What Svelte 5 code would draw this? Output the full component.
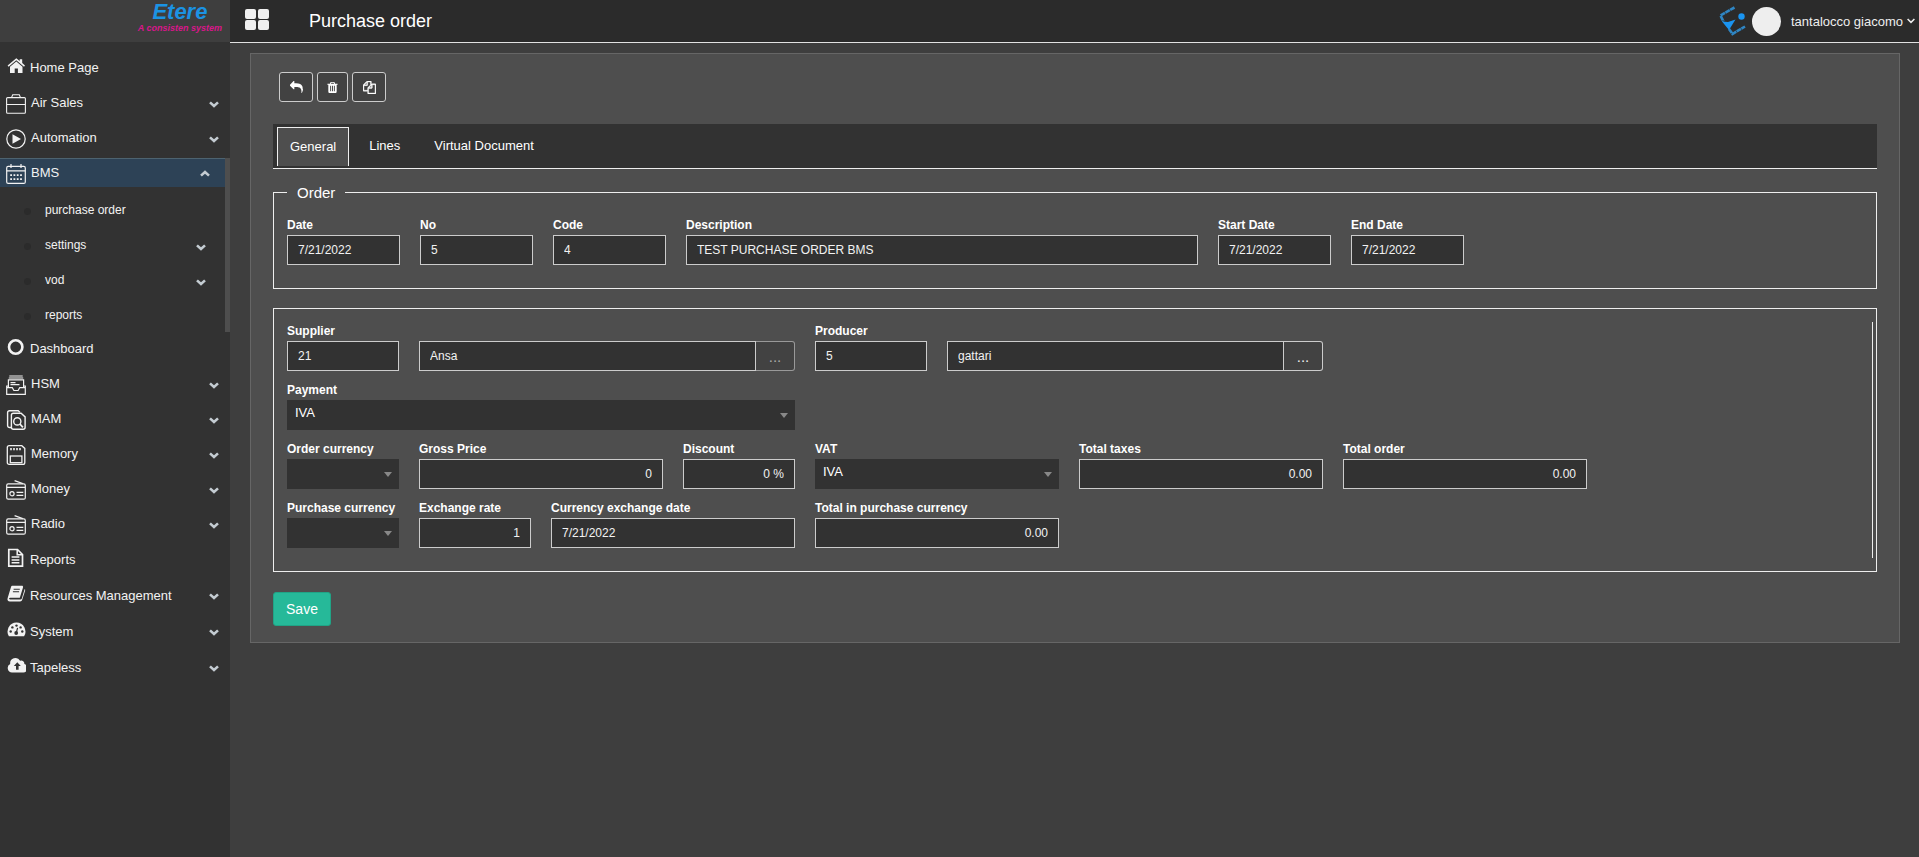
<script lang="ts">
  interface MenuEntry {
    label: string;
    icon: string;
    glyph?: boolean;
    leaf?: boolean;
    children?: { label: string; leaf?: boolean }[];
  }

  interface Field {
    id: string;
    label?: string;
    name?: string;
    value: string;
    kind?: "select" | "lookup";
    span?: number;
    first?: boolean;
    numeric?: boolean;
    muted?: boolean;
  }

  const menu: MenuEntry[] = [
    { label: "Home Page", icon: "home", glyph: true, leaf: true },
    { label: "Air Sales", icon: "briefcase" },
    { label: "Automation", icon: "play" },
    {
      label: "BMS",
      icon: "calendar",
      children: [
        { label: "purchase order", leaf: true },
        { label: "settings" },
        { label: "vod" },
        { label: "reports", leaf: true },
      ],
    },
    { label: "Dashboard", icon: "circle", glyph: true, leaf: true },
    { label: "HSM", icon: "archive" },
    { label: "MAM", icon: "search-doc" },
    { label: "Memory", icon: "card" },
    { label: "Money", icon: "radio" },
    { label: "Radio", icon: "radio" },
    { label: "Reports", icon: "file", glyph: true, leaf: true },
    { label: "Resources Management", icon: "book", glyph: true },
    { label: "System", icon: "gauge", glyph: true },
    { label: "Tapeless", icon: "cloud", glyph: true },
  ];

  const tabs = ["General", "Lines", "Virtual Document"];
  let activeTab = $state("General");

  const orderFields: Field[] = [
    { id: "date", label: "Date", value: "7/21/2022" },
    { id: "no", label: "No", value: "5" },
    { id: "code", label: "Code", value: "4" },
    { id: "description", label: "Description", value: "TEST PURCHASE ORDER BMS", span: 4 },
    { id: "start-date", label: "Start Date", value: "7/21/2022" },
    { id: "end-date", label: "End Date", value: "7/21/2022" },
  ];

  const detailFields: Field[] = [
    { id: "supplier", label: "Supplier", value: "21" },
    { id: "supplier-name", name: "Supplier name", value: "Ansa", kind: "lookup", span: 3, muted: true },
    { id: "producer", label: "Producer", value: "5" },
    { id: "producer-name", name: "Producer name", value: "gattari", kind: "lookup", span: 3 },
    { id: "payment", label: "Payment", value: "IVA", kind: "select", span: 4, first: true },
    { id: "order-currency", label: "Order currency", value: "", kind: "select", first: true },
    { id: "gross-price", label: "Gross Price", value: "0", span: 2, numeric: true },
    { id: "discount", label: "Discount", value: "0 %", numeric: true },
    { id: "vat", label: "VAT", value: "IVA", kind: "select", span: 2 },
    { id: "total-taxes", label: "Total taxes", value: "0.00", span: 2, numeric: true },
    { id: "total-order", label: "Total order", value: "0.00", span: 2, numeric: true },
    { id: "purchase-currency", label: "Purchase currency", value: "", kind: "select", first: true },
    { id: "exchange-rate", label: "Exchange rate", value: "1", numeric: true },
    { id: "exchange-date", label: "Currency exchange date", value: "7/21/2022", span: 2 },
    { id: "total-purchase", label: "Total in purchase currency", value: "0.00", span: 2, numeric: true },
  ];
</script>

{#snippet chevron(up = false)}
  <svg class="chevron" class:up viewBox="0 0 10 7" aria-hidden="true">
    <path d="M1 1.4l4 3.6 4-3.6" fill="none" stroke="currentColor" stroke-width="2.6" />
  </svg>
{/snippet}

{#snippet icon(name: string)}
  {#if name === "home"}
    <svg class="icon" viewBox="0 0 20 20" fill="currentColor" aria-hidden="true">
      <path d="M4 10.8L10.300 5.600l6.200 5.200V17H11.900V12.500H8.700V17H4zM10.300 2.200L13.700 5V3.200H16.200V7.100L19 9.500 18 10.700 10.300 4.300 2.600 10.700 1.600 9.500z" />
    </svg>
  {:else if name === "circle"}
    <svg class="icon" viewBox="0 0 20 20" fill="none" stroke="currentColor" aria-hidden="true">
      <circle cx="9.700" cy="10" r="6.700" stroke-width="2.600" />
    </svg>
  {:else if name === "file"}
    <svg class="icon" viewBox="0 0 20 20" fill="none" stroke="currentColor" aria-hidden="true">
      <path d="M2.800 1.500h8.700l5 5V18.100H2.800z" stroke-width="1.700" />
      <path d="M11.200 1.500v5.200h5M5.600 9.100h7.800M5.600 11.900h7.800M5.600 14.700h7.800" stroke-width="1.500" />
    </svg>
  {:else if name === "book"}
    <svg class="icon" viewBox="0 0 20 20" aria-hidden="true">
      <path d="M6.200 1.800h9.600c1 0 1.500.7 1.200 1.600l-3.200 10.400H4.200c-1.300 0-1.600 1.400-.2 1.700h10.600c.5 0 .9-.3 1.100-.8l3-9.600c.7.500.5 1.200.3 1.900l-2.800 8.800c-.3 1-1.100 1.600-2.100 1.600H3.900c-1.900 0-2.900-1.600-2.300-3.200L5 3c.2-.7.600-1.200 1.200-1.200z" fill="currentColor" />
      <path d="M7.600 5.200h6.200M6.900 7.700h6.200" stroke="#323232" stroke-width="1.100" />
    </svg>
  {:else if name === "gauge"}
    <svg class="icon" viewBox="0 0 20 20" aria-hidden="true">
      <path d="M10.500 2.600a9 9 0 0 0-7.600 13.700h15.200A9 9 0 0 0 10.500 2.600z" fill="currentColor" />
      <g fill="#323232">
        <circle cx="4.700" cy="11.500" r="1.200" />
        <circle cx="6.400" cy="7.400" r="1.200" />
        <circle cx="10.500" cy="5.600" r="1.200" />
        <circle cx="14.600" cy="7.400" r="1.200" />
        <circle cx="16.300" cy="11.500" r="1.200" />
        <circle cx="10.200" cy="13" r="1.900" />
      </g>
      <path d="M10.200 13l1.400-5.200" stroke="#323232" stroke-width="1.200" />
    </svg>
  {:else if name === "cloud"}
    <svg class="icon" viewBox="0 0 20 20" aria-hidden="true">
      <path d="M6 16.500A4.500 4.500 0 0 1 4.200 8a5.300 5.300 0 0 1 9.900-3.200 3 3 0 0 1 4.200 3.300 4.300 4.300 0 0 1-.9 8.400z" fill="currentColor" />
      <path d="M11.300 6.300l3.500 3.700h-2.200v3.800H10V10H7.800z" fill="#323232" />
    </svg>
  {:else if name === "briefcase"}
    <svg class="icon" viewBox="0 0 20 20" fill="none" stroke="currentColor" stroke-width="1.100" aria-hidden="true">
      <rect x=".6" y="3.600" width="18.800" height="15.600" rx="1" />
      <path d="M5.500 3.600l1.200-2.800h6.600l1.200 2.800M.6 10.500h18.800" />
    </svg>
  {:else if name === "play"}
    <svg class="icon" viewBox="0 0 20 20" aria-hidden="true">
      <circle cx="10" cy="10" r="9.200" fill="none" stroke="currentColor" stroke-width="1.200" />
      <path d="M6.500 5.200L15 10l-8.500 4.800z" fill="currentColor" />
    </svg>
  {:else if name === "calendar"}
    <svg class="icon" viewBox="0 0 20 20" fill="none" stroke="currentColor" stroke-width="1.200" aria-hidden="true">
      <rect x=".7" y="2.400" width="18.600" height="17" rx="1.500" />
      <path d="M.7 6.800h18.600M5 0v4M15 0v4" />
      <path d="M4.200 11.200h12M4.200 15.200h12" stroke-width="1.700" stroke-dasharray="1.800 1.500" />
    </svg>
  {:else if name === "archive"}
    <svg class="icon" viewBox="0 0 20 20" fill="none" stroke="currentColor" stroke-width="1.200" aria-hidden="true">
      <path d="M3.300 1h13.400M2.800 3h14.400M2.400 12V4.900h15.200V12" />
      <path d="M4.500 7.600h5M4.500 9.600h9" />
      <path d="M2.400 11H.7v8.300h18.600V11h-1.700M.7 12.600h5.600l1.600 2.900h4.200l1.600-2.900h5.600" />
    </svg>
  {:else if name === "search-doc"}
    <svg class="icon" viewBox="0 0 20 20" fill="none" stroke="currentColor" stroke-width="1.400" aria-hidden="true">
      <path d="M5.400 17.500H3.600c-1.200 0-2-.8-2-2V2.700c0-1.200.8-2 2-2h8.600l1.700 1.500" />
      <path d="M7.400 3.300h7.700l4 3.600v10.400c0 1.200-.8 2-2 2H7.400c-1.200 0-2-.8-2-2v-12c0-1.200.8-2 2-2z" />
      <circle cx="11.300" cy="11.400" r="3.600" />
      <path d="M13.900 14l3 3.300" stroke-width="1.800" />
    </svg>
  {:else if name === "card"}
    <svg class="icon" viewBox="0 0 20 20" fill="none" stroke="currentColor" stroke-width="1.300" aria-hidden="true">
      <path d="M3.200.7h12.600l3 2.700v14c0 1.200-.8 1.900-1.900 1.900H3.200c-1.200 0-1.900-.8-1.900-1.900V2.600c0-1.100.8-1.900 1.900-1.900z" />
      <rect x="4.300" y="11" width="11.600" height="6.700" />
      <path d="M4.200 4.200h10.600" stroke-width="2.200" stroke-dasharray="1.600 1.400" />
    </svg>
  {:else if name === "radio"}
    <svg class="icon" viewBox="0 0 20 20" fill="none" stroke="currentColor" stroke-width="1.200" aria-hidden="true">
      <path d="M16.800 3.600L8.600.6" />
      <rect x=".7" y="3.900" width="18.600" height="15.300" rx="1.500" />
      <path d="M.7 7.300h18.600M10.500 12.300h6.800M10.500 15.300h6.800" />
      <circle cx="6" cy="13.700" r="2.100" />
    </svg>
  {/if}
{/snippet}

{#snippet formField(field: Field)}
  <div class="field span-{field.span ?? 1}" class:first={field.first}>
    {#if field.label}
      <label for={field.id}>{field.label}</label>
    {/if}
    {#if field.kind === "select"}
      <div class="select">
        <select id={field.id}>
          <option>{field.value}</option>
        </select>
      </div>
    {:else if field.kind === "lookup"}
      <div class="lookup">
        <input id={field.id} type="text" value={field.value} aria-label={field.name} />
        <button type="button" class:muted={field.muted}>...</button>
      </div>
    {:else}
      <input id={field.id} type="text" value={field.value} class:numeric={field.numeric} />
    {/if}
  </div>
{/snippet}

<div class="app">
  <aside class="sidebar">
    <div class="brand">
      <div class="brand-text">
        <span class="brand-name">Etere</span>
        <span class="brand-tag">A consisten system</span>
      </div>
    </div>

    <nav>
      <ul class="menu">
        {#each menu as entry}
          <li>
            <a href="#/" class="entry" class:glyph={entry.glyph} class:open={entry.children}>
              {@render icon(entry.icon)}
              <span class="entry-label">{entry.label}</span>
              {#if !entry.leaf}
                {@render chevron(!!entry.children)}
              {/if}
            </a>
            {#if entry.children}
              <ul class="submenu">
                {#each entry.children as child}
                  <li>
                    <a href="#/" class="child">
                      <span class="entry-label">{child.label}</span>
                      {#if !child.leaf}
                        {@render chevron()}
                      {/if}
                    </a>
                  </li>
                {/each}
              </ul>
            {/if}
          </li>
        {/each}
      </ul>
    </nav>
  </aside>

  <div class="content">
    <header class="topbar">
      <button type="button" class="apps" aria-label="Toggle menu">
        <svg viewBox="0 0 24 21" fill="currentColor">
          <rect width="11" height="10" rx="2" />
          <rect x="13" width="11" height="10" rx="2" />
          <rect y="11" width="11" height="10" rx="2" />
          <rect x="13" y="11" width="11" height="10" rx="2" />
        </svg>
      </button>
      <h1>Purchase order</h1>
      <button type="button" class="user">
        <svg class="mark" viewBox="0 0 28 32" fill="none" aria-hidden="true">
          <path d="M16.500 2.500L2.500 10.500 5.500 16.500M11 24l3.500 5 12.500-7.500" stroke="#2f86c4" stroke-width="2.600" stroke-dasharray="5 .5" />
          <path d="M4 16.500l6 .5 7.500-2.500L11 25z" fill="#1a94f0" />
          <circle cx="23.500" cy="11.500" r="3.200" fill="#1a94f0" />
        </svg>
        <span class="avatar"></span>
        <span>tantalocco giacomo</span>
        <svg class="caret" viewBox="0 0 8 6" fill="none" stroke="currentColor" stroke-width="1.500" aria-hidden="true">
          <path d="M.6 1L4 4.400 7.400 1" />
        </svg>
      </button>
    </header>

    <main>
      <form class="panel" onsubmit={(event) => event.preventDefault()}>
        <div class="toolbar">
          <button type="button" aria-label="Back">
            <svg viewBox="0 0 1792 1792" fill="currentColor">
              <path d="M1792 1120q0 166-127 451-3 7-10.500 24t-13.500 30-13 22q-12 17-28 17-15 0-23.500-10t-8.500-25q0-9 2.500-26.500t2.500-23.500q5-68 5-123 0-112-19.500-200.500t-54-153.500-89-112-118-78.500-142-48.500-159.500-25.500-173-7.500h-224v256q0 26-19 45t-45 19-45-19l-512-512q-19-19-19-45t19-45l512-512q19-19 45-19t45 19 19 45v256h224q713 0 875 403 53 134 53 333z" />
            </svg>
          </button>
          <button type="button" class="narrow" aria-label="Delete">
            <svg viewBox="0 0 1792 1792" fill="currentColor">
              <path d="M704 1376v-704q0-14-9-23t-23-9h-64q-14 0-23 9t-9 23v704q0 14 9 23t23 9h64q14 0 23-9t9-23zm256 0v-704q0-14-9-23t-23-9h-64q-14 0-23 9t-9 23v704q0 14 9 23t23 9h64q14 0 23-9t9-23zm256 0v-704q0-14-9-23t-23-9h-64q-14 0-23 9t-9 23v704q0 14 9 23t23 9h64q14 0 23-9t9-23zm-544-992h448l-48-117q-7-9-17-11h-317q-10 2-17 11zm928 32v64q0 14-9 23t-23 9h-96v948q0 83-47 143.500t-113 60.500h-832q-66 0-113-58.500t-47-141.500v-952h-96q-14 0-23-9t-9-23v-64q0-14 9-23t23-9h309l70-167q15-37 54-63t79-26h320q40 0 79 26t54 63l70 167h309q14 0 23 9t9 23z" />
            </svg>
          </button>
          <button type="button" aria-label="Copy">
            <svg viewBox="0 0 1792 1792" fill="currentColor" stroke="currentColor" stroke-width="60">
              <path d="M1696 384q40 0 68 28t28 68v1216q0 40-28 68t-68 28h-960q-40 0-68-28t-28-68v-288h-544q-40 0-68-28t-28-68v-672q0-40 20-88t48-76l408-408q28-28 76-48t88-20h416q40 0 68 28t28 68v328q68-40 128-40h416zm-544 213l-299 299h299v-299zm-640-384l-299 299h299v-299zm196 647l316-316v-416h-384v416q0 40-28 68t-68 28h-416v640h512v-256q0-40 20-88t48-76zm956 804v-1152h-384v416q0 40-28 68t-68 28h-416v640h896z" />
            </svg>
          </button>
        </div>

        <div class="tabs" role="tablist">
          {#each tabs as tab}
            <button
              type="button"
              role="tab"
              class:active={tab === activeTab}
              aria-selected={tab === activeTab}
              onclick={() => (activeTab = tab)}
            >
              {tab}
            </button>
          {/each}
        </div>

        <fieldset class="group">
          <legend>Order</legend>
          <div class="grid">
            {#each orderFields as field}
              {@render formField(field)}
            {/each}
          </div>
        </fieldset>

        <div class="details">
          <div class="grid details-body">
            {#each detailFields as field}
              {@render formField(field)}
            {/each}
          </div>
        </div>

        <button type="submit" class="save">Save</button>
      </form>
    </main>
  </div>
</div>

<style>
  :global(body) {
    background: #3e3e3e;
    color: #fff;
    font-family: "Liberation Sans", Arial, sans-serif;
    font-size: 13px;
  }

  button,
  input,
  select {
    font-family: inherit;
    margin: 0;
    box-sizing: border-box;
  }

  button {
    padding: 0;
    cursor: pointer;
  }

  .app {
    display: grid;
    grid-template-columns: 230px minmax(0, 1fr);
    min-height: 100vh;
  }

  /* sidebar */
  .sidebar {
    background: #323232;
  }

  .brand {
    display: flex;
    justify-content: flex-end;
    height: 42px;
    padding-right: 8px;
    background: #3e3e3e;
  }

  .brand-text {
    display: flex;
    flex-direction: column;
    align-items: center;
    font-weight: bold;
    font-style: italic;
  }

  .brand-name {
    color: #1b93e4;
    font-size: 22px;
    line-height: 24px;
  }

  .brand-tag {
    color: #d8168a;
    font-size: 9px;
    line-height: 8px;
  }

  ul {
    list-style: none;
    margin: 0;
    padding: 0;
  }

  .menu {
    padding-top: 7px;
  }

  .entry {
    display: flex;
    align-items: center;
    height: 35px;
    padding: 0 11px 0 6px;
    box-sizing: border-box;
    color: #f2f2f2;
    text-decoration: none;
  }

  .entry.glyph {
    height: 36px;
  }

  .entry.open {
    height: 29px;
    margin: 3px 5px 3px 0;
    padding: 0 15px 2px 6px;
    background: #2d4256;
    border-top: 1px solid #4d6370;
  }

  .icon {
    flex: none;
    width: 20px;
    height: 20px;
    margin-top: 3px;
  }

  .glyph .icon {
    margin: 0 0 3px;
  }

  .entry-label {
    flex: 1;
    padding-left: 5px;
  }

  .glyph .entry-label {
    padding-left: 4px;
  }

  .chevron {
    width: 10px;
    height: 7px;
    margin-top: 3px;
    color: #c4ccd2;
  }

  .chevron.up {
    transform: rotate(180deg);
  }

  .menu > li {
    position: relative;
  }

  .submenu {
    padding-top: 2px;
    margin-bottom: -2px;
  }

  /* scroll track beside the open section */
  .submenu::after {
    content: "";
    position: absolute;
    top: 0;
    right: 0;
    bottom: 0;
    width: 5px;
    background: #4e4e4e;
  }

  .child {
    position: relative;
    display: flex;
    align-items: center;
    height: 35px;
    padding: 0 24px 0 40px;
    color: #f2f2f2;
    font-size: 12px;
    text-decoration: none;
  }

  .child .chevron {
    margin-top: 6px;
  }

  .child::before {
    content: "";
    position: absolute;
    left: 24px;
    top: 16px;
    width: 7px;
    height: 7px;
    border-radius: 50%;
    background: #2b2b2b;
  }

  /* top bar */
  .topbar {
    display: flex;
    align-items: center;
    height: 42px;
    padding-left: 15px;
    background: #2b2b2b;
    border-bottom: 1px solid #e2e2e2;
  }

  .apps {
    width: 24px;
    height: 21px;
    margin-bottom: 3px;
    background: none;
    border: none;
    color: #f0f0f0;
  }

  .apps svg {
    display: block;
  }

  h1 {
    flex: 1;
    margin: 0 0 0 40px;
    font-size: 18px;
    font-weight: normal;
  }

  .user {
    display: flex;
    align-items: center;
    padding-right: 4px;
    background: none;
    border: none;
    color: #eee;
    font-size: 13px;
  }

  .mark {
    width: 28px;
    height: 32px;
    margin-right: 6px;
  }

  .avatar {
    width: 29px;
    height: 29px;
    margin-right: 10px;
    border-radius: 50%;
    background: #eee;
  }

  .caret {
    width: 8px;
    height: 6px;
    margin-left: 4px;
  }

  /* form panel */
  main {
    padding: 10px 19px 20px 20px;
  }

  .panel {
    padding: 18px 22px 16px;
    background: #4e4e4e;
    border: 1px solid #666;
  }

  .toolbar {
    display: flex;
    gap: 4px;
    margin: 0 0 22px 6px;
  }

  .toolbar button {
    display: flex;
    align-items: center;
    justify-content: center;
    width: 34px;
    height: 30px;
    background: #424242;
    border: 1px solid #ccc;
    border-radius: 3px;
    color: #fff;
  }

  .toolbar .narrow {
    width: 31px;
  }

  .toolbar svg {
    width: 13px;
    height: 13px;
  }

  .tabs {
    display: flex;
    align-items: center;
    gap: 6px;
    height: 44px;
    padding-left: 4px;
    background: #323232;
    border-bottom: 1px solid #eee;
  }

  .tabs button {
    height: 39px;
    padding: 0 13px 2px;
    background: none;
    border: 1px solid transparent;
    border-bottom: none;
    color: #fff;
    font-size: 13px;
  }

  .tabs .active {
    padding: 0 12px;
    background: #4e4e4e;
    border-color: #eee;
  }

  .group {
    min-width: 0;
    margin: 14px 0 0;
    padding: 14px 13px 23px;
    border: 1px solid #eee;
  }

  legend {
    padding: 0 10px;
    font-size: 15px;
    line-height: 19px;
  }

  .grid {
    display: grid;
    grid-template-columns: repeat(12, minmax(0, 1fr));
    gap: 10px 20px;
    align-items: end;
  }

  .details {
    margin-top: 19px;
    padding: 13px 3px 13px 13px;
    border: 1px solid #eee;
  }

  .details-body {
    padding: 0 21px 10px 0;
    border-right: 1px solid #eee;
  }

  .span-2 {
    grid-column-end: span 2;
  }

  .span-3 {
    grid-column-end: span 3;
  }

  .span-4 {
    grid-column-end: span 4;
  }

  .first {
    grid-column-start: 1;
  }

  label {
    display: block;
    font-size: 12px;
    font-weight: bold;
    line-height: 19px;
    white-space: nowrap;
  }

  input {
    display: block;
    width: 100%;
    height: 30px;
    padding: 0 10px 1px;
    background: #323232;
    border: 1px solid #ccc;
    border-radius: 0;
    color: #f2f2f2;
    font-size: 12px;
  }

  .numeric {
    text-align: right;
  }

  .lookup {
    display: flex;
  }

  .lookup button {
    flex: none;
    width: 39px;
    height: 30px;
    background: #424242;
    border: 1px solid #ccc;
    border-left: none;
    border-radius: 0 3px 3px 0;
    color: #eee;
    font-size: 15px;
  }

  .lookup .muted {
    border-color: #999;
    color: #aaa;
  }

  .select {
    position: relative;
  }

  select {
    display: block;
    width: 100%;
    height: 30px;
    padding: 0 20px 5px 8px;
    appearance: none;
    background: #323232;
    border: none;
    border-radius: 0;
    color: #fff;
    font-size: 13px;
  }

  .select::after {
    content: "";
    position: absolute;
    right: 7px;
    top: 13px;
    border: 4px solid transparent;
    border-top: 5px solid #888;
    border-bottom: none;
    pointer-events: none;
  }

  .save {
    display: block;
    width: 58px;
    height: 34px;
    margin-top: 20px;
    background: #26b999;
    border: 1px solid #20a486;
    border-radius: 3px;
    color: #fff;
    font-size: 14px;
  }
</style>
